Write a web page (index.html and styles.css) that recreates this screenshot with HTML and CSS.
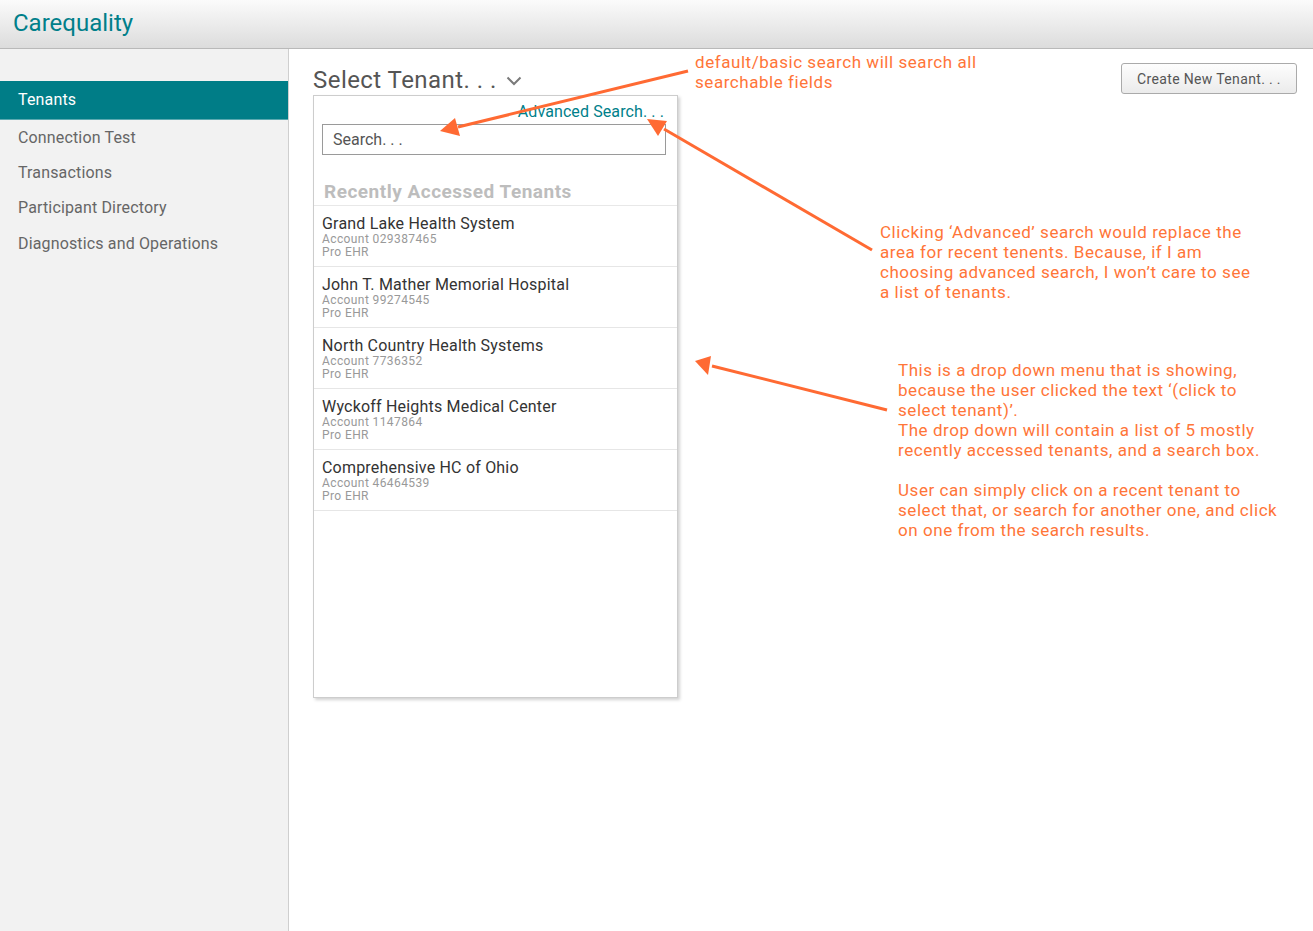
FILE: index.html
```html
<!DOCTYPE html>
<html>
<head>
<meta charset="utf-8">
<link rel="stylesheet" href="styles.css">
</head>
<body>
<header class="topbar"><span class="brand">Carequality</span></header>
<div class="layout">
  <nav class="sidebar">
    <div class="nav-item active">Tenants</div>
    <div class="nav-item">Connection Test</div>
    <div class="nav-item">Transactions</div>
    <div class="nav-item">Participant Directory</div>
    <div class="nav-item">Diagnostics and Operations</div>
  </nav>
  <main class="main">
    <div class="picker">
      <div class="picker-title">Select Tenant. . .
        <svg class="chev" width="16" height="10" viewBox="0 0 16 10"><path d="M1.5 1.5 L8 8 L14.5 1.5" fill="none" stroke="#7a7a7a" stroke-width="2"/></svg>
      </div>
      <div class="dropdown">
        <div class="adv">Advanced Search. . .</div>
        <div class="search">Search. . .</div>
        <div class="recent-title">Recently Accessed Tenants</div>
        <ul class="tenants">
          <li><div class="t-name">Grand Lake Health System</div><div class="t-meta">Account 029387465</div><div class="t-meta">Pro EHR</div></li>
          <li><div class="t-name">John T. Mather Memorial Hospital</div><div class="t-meta">Account 99274545</div><div class="t-meta">Pro EHR</div></li>
          <li><div class="t-name">North Country Health Systems</div><div class="t-meta">Account 7736352</div><div class="t-meta">Pro EHR</div></li>
          <li><div class="t-name">Wyckoff Heights Medical Center</div><div class="t-meta">Account 1147864</div><div class="t-meta">Pro EHR</div></li>
          <li><div class="t-name">Comprehensive HC of Ohio</div><div class="t-meta">Account 46464539</div><div class="t-meta">Pro EHR</div></li>
        </ul>
      </div>
    </div>
    <button class="create-btn">Create New Tenant. . .</button>
  </main>
</div>

<div class="note note-1">default/basic search will search all<br>searchable fields</div>
<div class="note note-2">Clicking ‘Advanced’ search would replace the<br>area for recent tenents. Because, if I am<br>choosing advanced search, I won’t care to see<br>a list of tenants.</div>
<div class="note note-3">This is a drop down menu that is showing,<br>because the user clicked the text ‘(click to<br>select tenant)’.<br>The drop down will contain a list of 5 mostly<br>recently accessed tenants, and a search box.<br><br>User can simply click on a recent tenant to<br>select that, or search for another one, and click<br>on one from the search results.</div>

<svg class="arrows" width="1313" height="931" viewBox="0 0 1313 931">
  <g stroke="#ff6a33" stroke-width="3" fill="none">
    <line x1="688" y1="71" x2="458" y2="127"/>
    <line x1="872" y1="250" x2="664" y2="129"/>
    <line x1="887" y1="410" x2="712" y2="366"/>
  </g>
  <g fill="#ff6a33">
    <polygon points="440,131 455,118 460,136"/>
    <polygon points="647,119 667,121 658,136"/>
    <polygon points="695,361 711,356 708,375"/>
  </g>
</svg>
</body>
</html>
```
FILE: styles.css
```css
* { box-sizing: border-box; }
html, body { margin: 0; padding: 0; }
body {
  font-family: Roboto, "Noto Sans", sans-serif;
  background: #fff;
  width: 1313px;
  height: 931px;
  overflow: hidden;
  position: relative;
}
.topbar {
  height: 49px;
  background: linear-gradient(#fbfbfb, #dcdcdc);
  border-bottom: 1px solid #b9b9b9;
  padding-left: 13px;
  display: flex;
  align-items: center;
}
.brand {
  color: #007f8a;
  font-size: 24px;
  line-height: 28px;
  margin-top: -3px;
}
.layout {
  display: flex;
  height: 882px;
}
.sidebar {
  width: 289px;
  flex: none;
  background: #f2f2f2;
  border-right: 1px solid #cfcfcf;
  padding-top: 32px;
}
.nav-item {
  height: 35px;
  line-height: 35px;
  padding-left: 18px;
  font-size: 16px;
  color: #666;
  letter-spacing: 0.15px;
}
.nav-item:last-child { line-height: 38px; }
.nav-item.active {
  height: 39px;
  line-height: 38px;
  background: #007d87;
  color: #fff;
  border-bottom: 1px solid #5aa9b0;
}
.main {
  flex: 1;
  display: flex;
  justify-content: space-between;
  align-items: flex-start;
  padding: 16px 16px 0 24px;
}
.picker-title {
  font-size: 24px;
  line-height: 30px;
  color: #555;
  display: flex;
  align-items: center;
  gap: 9px;
  letter-spacing: 0.45px;
}
.chev { margin-top: 2px; }
.dropdown {
  width: 365px;
  height: 603px;
  border: 1px solid #cdcdcd;
  box-shadow: 2px 2px 3px rgba(0,0,0,0.18);
  background: #fff;
}
.adv {
  text-align: right;
  color: #00808a;
  font-size: 16px;
  line-height: 20px;
  padding: 6px 13px 0 0;
  letter-spacing: 0.1px;
}
.search {
  margin: 2px 11px 0 8px;
  height: 31px;
  border: 1px solid #9a9a9a;
  font-size: 16px;
  line-height: 29px;
  color: #555;
  padding-left: 10px;
}
.recent-title {
  margin-top: 26px;
  padding-left: 10px;
  font-size: 19px;
  line-height: 22px;
  font-weight: bold;
  color: #bdbdbd;
  padding-bottom: 2px;
  border-bottom: 1px solid #e8e8e8;
  letter-spacing: 0.5px;
}
.tenants {
  list-style: none;
  margin: 0;
  padding: 0;
}
.tenants li {
  padding: 8px 8px 7px 8px;
  border-bottom: 1px solid #e6e6e6;
}
.t-name {
  font-size: 16px;
  line-height: 19px;
  color: #333;
  letter-spacing: 0.2px;
}
.t-meta {
  font-size: 12px;
  line-height: 13px;
  color: #999;
  letter-spacing: 0.4px;
}
.create-btn {
  margin-top: -2px;
  width: 176px;
  height: 31px;
  border: 1px solid #aaa;
  border-radius: 3px;
  background: linear-gradient(#fdfdfd, #ebebeb);
  font-family: Roboto, sans-serif;
  font-size: 14px;
  color: #555;
  padding: 0;
  letter-spacing: 0.35px;
}
.note {
  position: absolute;
  color: #ff7538;
  font-size: 17px;
  line-height: 20px;
  letter-spacing: 0.55px;
}
.note-1 { left: 695px; top: 52px; }
.note-2 { left: 880px; top: 222px; }
.note-3 { left: 898px; top: 360px; }
.arrows {
  position: absolute;
  left: 0;
  top: 0;
  pointer-events: none;
}
```
